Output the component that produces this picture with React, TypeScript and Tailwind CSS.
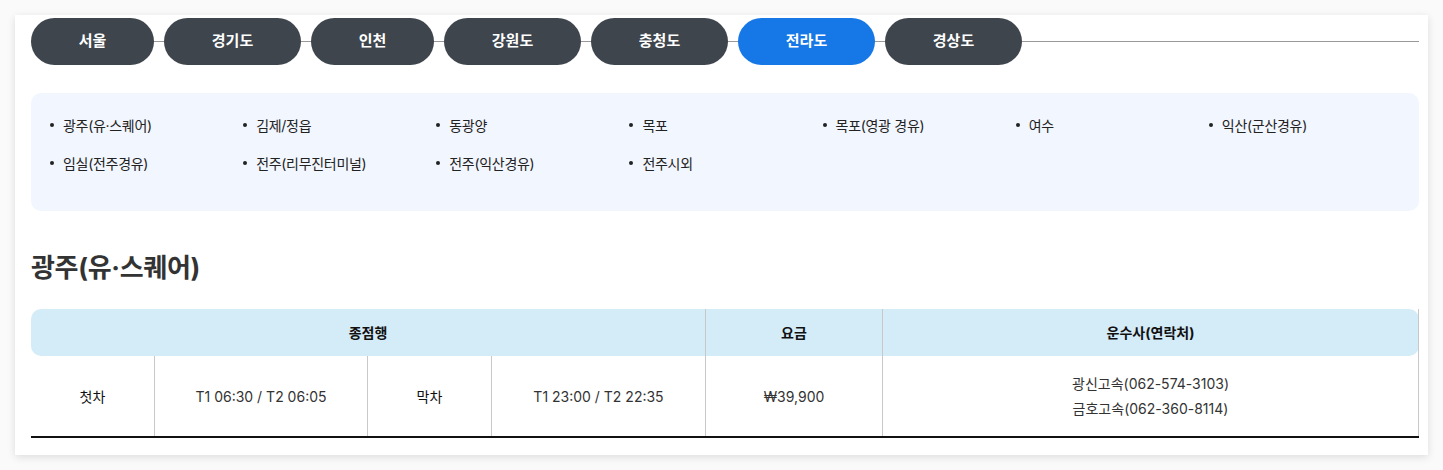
const regions = [
  { name: "서울", active: false },
  { name: "경기도", active: false },
  { name: "인천", active: false },
  { name: "강원도", active: false },
  { name: "충청도", active: false },
  { name: "전라도", active: true },
  { name: "경상도", active: false },
];

const terminals = [
  "광주(유·스퀘어)",
  "김제/정읍",
  "동광양",
  "목포",
  "목포(영광 경유)",
  "여수",
  "익산(군산경유)",
  "임실(전주경유)",
  "전주(리무진터미널)",
  "전주(익산경유)",
  "전주시외",
];

function RegionTabs() {
  return (
    <div className="relative flex items-center gap-[10px] h-[47px]">
      <div className="absolute left-0 right-0 top-[23px] h-px bg-[#999]" />
      {regions.map((r) => (
        <button
          key={r.name}
          className={
            "relative z-10 h-[47px] rounded-full text-[15px] font-bold text-white " +
            (r.name.length > 2 ? "w-[137px] " : "w-[123px] ") +
            (r.active ? "bg-[#1677e6]" : "bg-[#3e454d]")
          }
        >
          {r.name}
        </button>
      ))}
    </div>
  );
}

function TerminalList() {
  return (
    <ul className="mt-[28px] h-[118px] rounded-[10px] bg-[#f2f6fe] pl-5 pr-4 pt-[22px] grid grid-cols-7 content-start gap-y-[18px]">
      {terminals.map((t) => (
        <li key={t} className="flex items-center h-[20px] text-[14px] text-[#222] tracking-[-0.3px]">
          <span className="ml-[-1px] w-[4px] h-[4px] rounded-full bg-[#222] mr-[9px] shrink-0" />
          {t}
        </li>
      ))}
    </ul>
  );
}

function Timetable() {
  return (
    <div className="mt-[22px] text-[14px]">
      <div className="flex h-[47px] rounded-[10px] bg-[#d4ebf8] font-bold text-[#111]">
        <div className="w-[675px] flex items-center justify-center border-r border-[#c8c8c8]">종점행</div>
        <div className="w-[177px] flex items-center justify-center border-r border-[#c8c8c8]">요금</div>
        <div className="flex-1 flex items-center justify-center border-r border-[#c8c8c8]">운수사(연락처)</div>
      </div>
      <div className="flex h-[82px] border-b-2 border-[#111] text-[#333]">
        <div className="w-[124px] flex items-center justify-center border-r border-[#c8c8c8] text-[#111]">첫차</div>
        <div className="w-[213px] flex items-center justify-center border-r border-[#c8c8c8]">T1 06:30 / T2 06:05</div>
        <div className="w-[124px] flex items-center justify-center border-r border-[#c8c8c8] text-[#111]">막차</div>
        <div className="w-[214px] flex items-center justify-center border-r border-[#c8c8c8]">T1 23:00 / T2 22:35</div>
        <div className="w-[177px] flex items-center justify-center border-r border-[#c8c8c8]">₩39,900</div>
        <div className="flex-1 flex flex-col items-center justify-center gap-[5px] border-r border-[#c8c8c8] leading-[20px]">
          <span>광신고속(062-574-3103)</span>
          <span>금호고속(062-360-8114)</span>
        </div>
      </div>
    </div>
  );
}

export default function App() {
  return (
    <div
      className="min-h-[470px] bg-[#fafafa] pt-[15px] pl-[15px]"
      style={{ fontFamily: 'Inter, "Noto Sans CJK KR", sans-serif' }}
    >
      <div className="w-[1413px] bg-white shadow-[0_2px_8px_rgba(0,0,0,0.12)] pl-4 pr-[9px] pt-[3px] pb-[17px]">
        <RegionTabs />
        <TerminalList />
        <h2 className="mt-[38px] text-[26px] leading-[38px] font-bold text-[#333] tracking-[-0.3px]">광주(유·스퀘어)</h2>
        <Timetable />
      </div>
    </div>
  );
}
